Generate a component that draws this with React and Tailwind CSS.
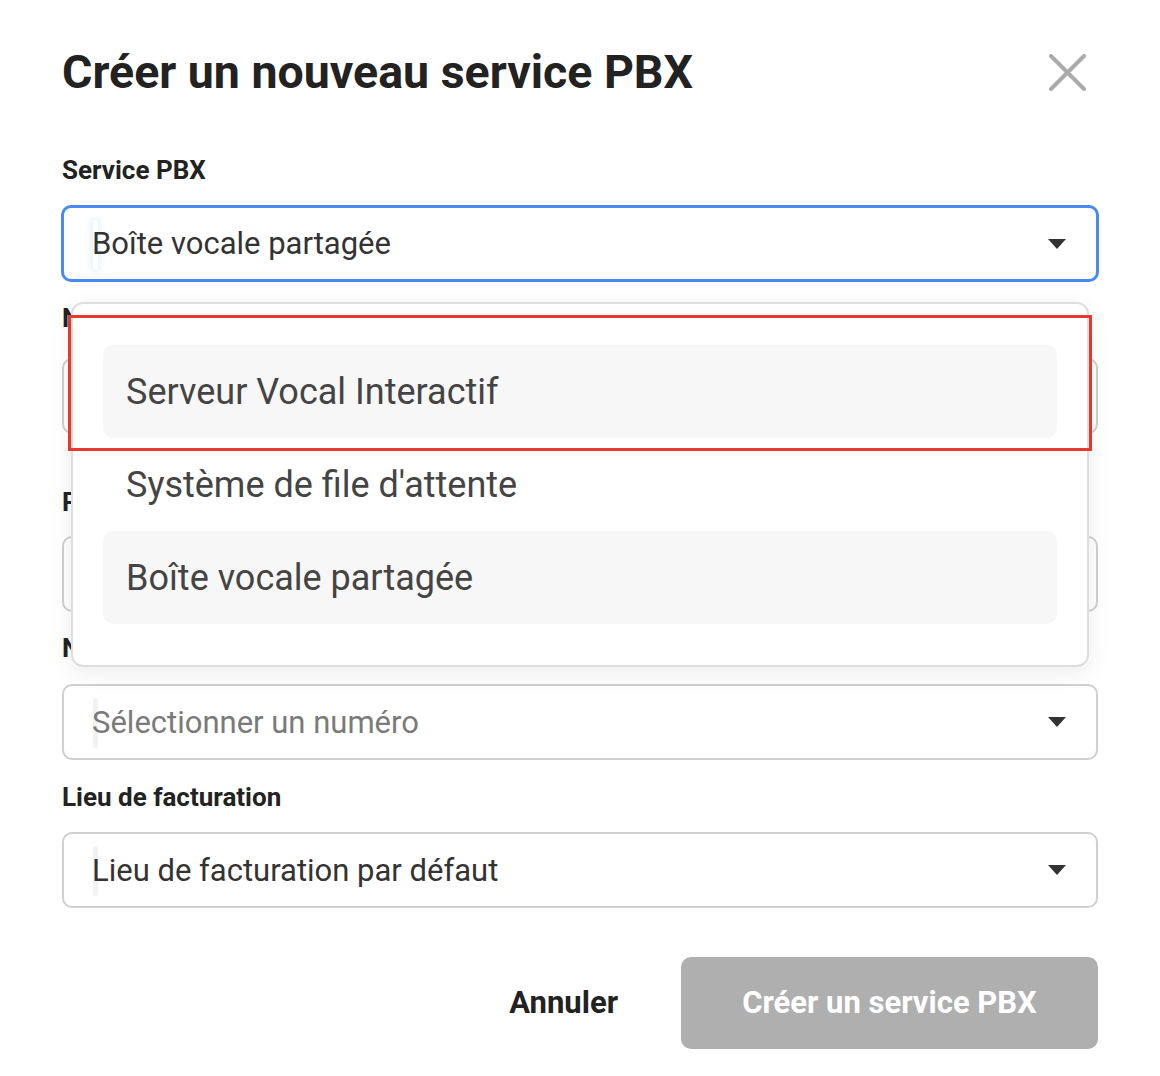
import React from 'react';

const font = { fontFamily: 'Roboto, "Noto Sans", sans-serif' };

const Caret = () => (
  <svg width="18" height="10" viewBox="0 0 18 10" className="shrink-0">
    <path d="M0 0 H18 L9 10 Z" fill="#333" />
  </svg>
);

const Field = ({ value, placeholder, focused, className }) => (
  <div
    className={
      'relative flex items-center justify-between rounded-[10px] bg-white pl-[28px] pr-[30px] ' +
      (focused
        ? '-mx-px h-[77px] border-[3px] border-[#4a88f2]'
        : 'h-[76px] border-[2px] border-[#d0d0d0]') +
      ' ' +
      (className || '')
    }
  >
    <span
      className={
        'absolute left-[29px] top-[12px] h-[50px] w-[5px] rounded-full ' +
        (focused ? 'bg-white shadow-[0_0_6px_2px_rgba(74,136,242,0.15)]' : 'bg-[#f2f2f2]')
      }
    />
    <span
      className={
        'relative text-[31px] leading-none ' + (placeholder ? 'text-[#7a7a7a]' : 'text-[#333]')
      }
    >
      {value || placeholder}
    </span>
    <Caret />
  </div>
);

const Label = ({ children, className }) => (
  <div
    className={
      'flex h-[28px] items-center text-[26px] font-bold text-[#222] ' + (className || '')
    }
  >
    {children}
  </div>
);

const options = [
  { label: 'Serveur Vocal Interactif', hl: true },
  { label: "Système de file d'attente", hl: false },
  { label: 'Boîte vocale partagée', hl: true },
];

const App = () => {
  return (
    <div style={font} className="relative h-[1076px] w-[1160px] overflow-hidden bg-white">
      <div className="px-[62px] pt-[44px]">
        {/* header */}
        <div className="flex h-[56px] items-center justify-between">
          <h1 className="text-[46.5px] font-bold leading-none text-[#222]">
            Créer un nouveau service PBX
          </h1>
          <button type="button" className="mr-[12px]">
            <svg width="37" height="37" viewBox="0 0 37 37">
              <path
                d="M2 2 L35 35 M35 2 L2 35"
                stroke="#ababab"
                strokeWidth="4"
                strokeLinecap="round"
              />
            </svg>
          </button>
        </div>

        <Label className="mt-[56px]">Service PBX</Label>
        <Field className="mt-[21px]" value="Boîte vocale partagée" focused />

        <Label className="mt-[22px]">Nom du service</Label>
        <Field className="mt-[26px]" placeholder="Saisir un nom" />

        <Label className="mt-[54px]">Poste</Label>
        <Field className="mt-[20px]" placeholder="Saisir un poste" />

        <Label className="mt-[22px]">Numéro de téléphone</Label>
        <Field className="mt-[22px]" placeholder="Sélectionner un numéro" />

        <Label className="mt-[23px]">Lieu de facturation</Label>
        <Field className="mt-[21px]" value="Lieu de facturation par défaut" />

        {/* footer */}
        <div className="mt-[49px] flex items-center justify-end">
          <button type="button" className="mr-[63px] text-[31px] font-bold text-[#222]">
            Annuler
          </button>
          <button
            type="button"
            className="flex h-[92px] w-[417px] items-center justify-center rounded-[10px] bg-[#afafaf] text-[31px] font-bold text-white"
          >
            Créer un service PBX
          </button>
        </div>
      </div>

      {/* open dropdown menu */}
      <div className="absolute left-[71px] top-[302px] flex h-[365px] w-[1018px] flex-col rounded-[12px] border-[2px] border-[#dedede] bg-white px-[30px] py-[41px] shadow-[0_6px_24px_rgba(0,0,0,0.08)]">
        {options.map((o) => (
          <div
            key={o.label}
            className={
              'flex h-[93px] items-center rounded-[10px] pl-[23px] text-[36px] text-[#444] ' +
              (o.hl ? 'bg-[#f7f7f7]' : '')
            }
          >
            {o.label}
          </div>
        ))}
      </div>

      {/* annotation */}
      <div className="absolute left-[68px] top-[315px] h-[136px] w-[1024px] border-[3px] border-[#e6392b]" />
    </div>
  );
};

export default App;
